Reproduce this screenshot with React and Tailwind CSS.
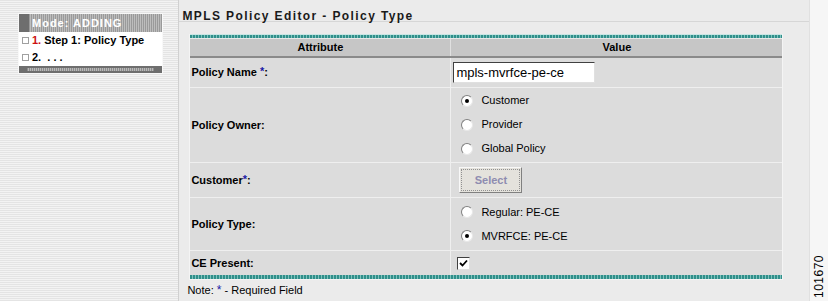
import React from 'react';

const font = "font-['Liberation_Sans',Arial,sans-serif]";

const Radio = ({ checked, label }) => (
    <label className="flex items-center gap-[8px] h-[24px] text-[11px] text-black">
        <span className="w-[12px] h-[12px] rounded-full bg-white border border-[#808080] border-r-[#e8e8e8] border-b-[#e8e8e8] flex items-center justify-center">
            {checked && <span className="w-[4px] h-[4px] rounded-full bg-black" />}
        </span>
        {label}
    </label>
);

const Req = () => <sup className="text-[#1a1aa6] text-[11px] font-bold relative top-[-1px]">*</sup>;

const Row = ({ label, h, children, last }) => (
    <div className={`flex ${last ? '' : 'border-b border-[#efefef]'}`} style={{ height: h }}>
        <div className="w-[261px] flex items-center pl-[1px] text-[11px] font-bold text-black border-r border-[#efefef]">
            {label}
        </div>
        <div className="flex-1 pl-[8px] flex flex-col justify-center">{children}</div>
    </div>
);

const App = () => {
    return (
        <div className={`w-[828px] h-[301px] flex bg-[#ebebeb] overflow-hidden ${font}`}>
            {/* Sidebar */}
            <div className="w-[180px] h-full bg-[repeating-linear-gradient(180deg,#e4e4e4_0px,#e4e4e4_1px,#f3f3f3_1px,#f3f3f3_2px)] border-r border-[#d0d0d0] pt-[13px] pl-[18px]">
                <div className="w-[145px] border border-[#f8f8f8]">
                    <div className="h-[18px] bg-[repeating-linear-gradient(90deg,#9a9a9a_0px,#9a9a9a_1px,#bdbdbd_1px,#bdbdbd_2px)] border-l-[10px] border-[#6e6e6e] flex items-center pl-[3px]">
                        <span className="text-white text-[11px] font-bold tracking-[1px]">Mode: ADDING</span>
                    </div>
                    <div className="bg-white">
                        <div className="h-[17px] flex items-center pl-[3px] gap-[3px] text-[11px] font-bold">
                            <span className="w-[7px] h-[7px] border border-[#a0a0a0]" />
                            <span className="text-[#cc1010]">1.</span>
                            <span className="text-black">Step 1: Policy Type</span>
                        </div>
                        <div className="h-[17px] flex items-center pl-[3px] gap-[3px] text-[11px] font-bold">
                            <span className="w-[7px] h-[7px] border border-[#a0a0a0]" />
                            <span className="text-black">2. &nbsp;. . .</span>
                        </div>
                    </div>
                    <div className="h-[7px] bg-[#6e6e6e] px-[8px] py-[2px]">
                        <div className="h-full bg-[repeating-linear-gradient(90deg,#8c8c8c_0px,#8c8c8c_1px,#b8b8b8_1px,#b8b8b8_2px)]" />
                    </div>
                </div>
            </div>

            {/* Main */}
            <div className="w-[632px] h-full flex flex-col">
                <div className="h-[22px] border-b border-[#d6d6d6] pl-[3px] pt-[3px]">
                    <span className="text-[12px] font-bold tracking-[1.4px] text-[#1a1a1a]">MPLS Policy Editor - Policy Type</span>
                </div>
                <div className="ml-[10px] mt-[12px] w-[594px] border border-[#f4f4f4] border-t-0">
                    <div className="h-[4px] bg-[repeating-linear-gradient(90deg,#2f8f8a_0px,#2f8f8a_2px,#7fc2bd_2px,#7fc2bd_3px)] border-t border-[#c8e6e4]" />
                    <div className="flex h-[20px] bg-[#c6c6c6] border-t border-[#e8e8e8] border-b-2 border-b-[#8a8a8a] text-[11px] font-bold text-black">
                        <div className="w-[261px] flex items-center justify-center border-r border-[#e0e0e0]">Attribute</div>
                        <div className="flex-1 flex items-center justify-center">Value</div>
                    </div>
                    <div className="bg-[#dcdcdc]">
                        <Row label={<span>Policy Name <Req />:</span>} h={30}>
                            <div className="ml-[-6px] w-[142px] h-[21px] bg-white border border-[#404040] border-r-[#e0e0e0] border-b-[#e0e0e0] pl-[2px] flex items-center text-[13px] text-black">
                                mpls-mvrfce-pe-ce
                            </div>
                        </Row>
                        <Row label="Policy Owner:" h={75}>
                            <div className="pl-[2px] pb-[1px]">
                                <Radio checked label="Customer" />
                                <Radio label="Provider" />
                                <Radio label="Global Policy" />
                            </div>
                        </Row>
                        <Row label={<span>Customer<Req />:</span>} h={35}>
                            <button className="w-[63px] h-[26px] bg-[#e4e2dc] border border-[#808080] border-t-[#f8f8f8] border-l-[#f8f8f8] outline outline-1 outline-dotted outline-[#909090] outline-offset-[-3px] text-[11px] font-bold text-[#8e8cb0]">
                                Select
                            </button>
                        </Row>
                        <Row label="Policy Type:" h={53}>
                            <div className="pl-[2px]">
                                <Radio label="Regular: PE-CE" />
                                <Radio checked label="MVRFCE: PE-CE" />
                            </div>
                        </Row>
                        <Row label="CE Present:" h={24} last>
                            <span className="ml-[-2px] w-[13px] h-[13px] bg-white border border-[#404040] border-r-[#e0e0e0] border-b-[#e0e0e0] flex items-center justify-center">
                                <svg width="9" height="9" viewBox="0 0 9 9">
                                    <path d="M1 4 L3.5 6.5 L8 1.5" stroke="#000" strokeWidth="1.8" fill="none" />
                                </svg>
                            </span>
                        </Row>
                    </div>
                    <div className="h-[4px] bg-[repeating-linear-gradient(90deg,#2f8f8a_0px,#2f8f8a_2px,#7fc2bd_2px,#7fc2bd_3px)]" />
                </div>
                <div className="ml-[8px] mt-[3px] h-[14px] leading-[14px] text-[11px] text-black">
                    Note: <span className="text-[#1a1aa6] text-[12px]">*</span> - Required Field
                </div>
            </div>

            {/* Right strip */}
            <div className="flex-1 h-full bg-[#f6f6f6] border-l border-[#e0e0e0] flex items-end justify-center pb-[3px]">
                <span className="[writing-mode:vertical-rl] rotate-180 text-[12px] text-black tracking-[0.5px]">101670</span>
            </div>
        </div>
    );
};

export default App;
